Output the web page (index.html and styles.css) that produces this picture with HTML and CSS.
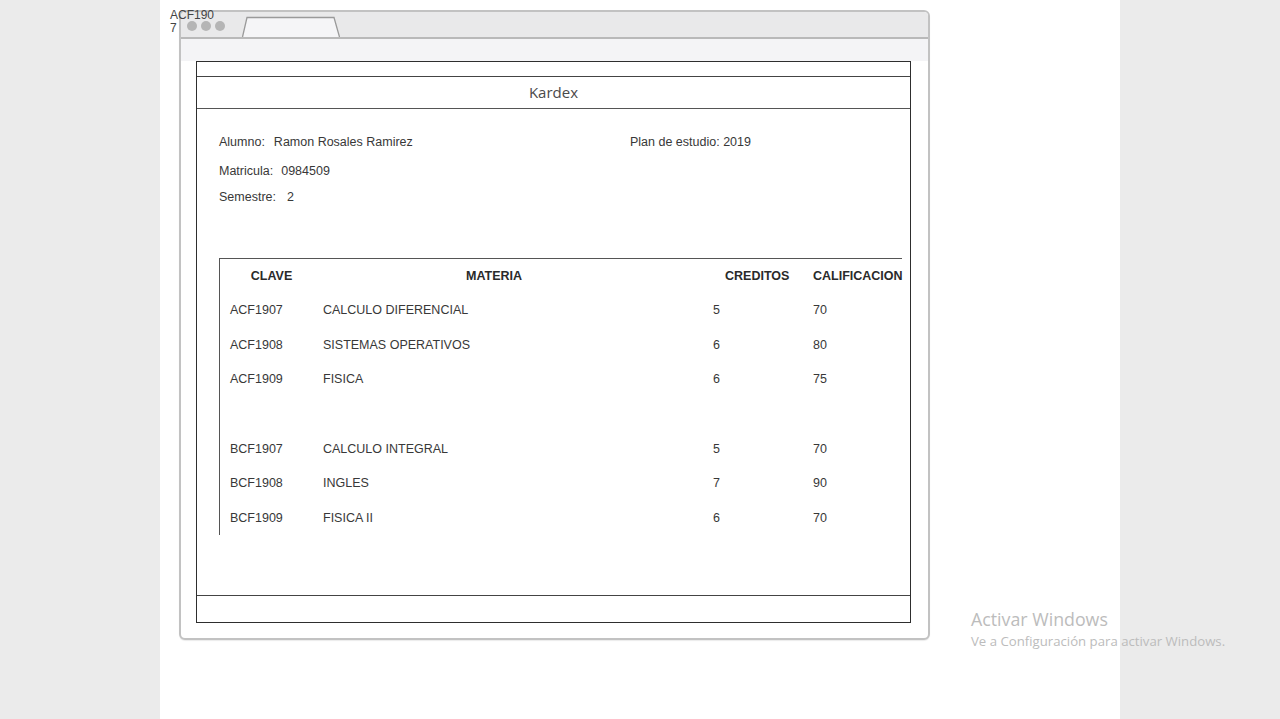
FILE: index.html
```html
<!DOCTYPE html>
<html lang="es">
<head>
<meta charset="utf-8">
<title>Kardex</title>
<link rel="stylesheet" href="styles.css">
</head>
<body>
<div class="page">
  <div class="window">
    <div class="titlebar">
      <span class="dot"></span><span class="dot"></span><span class="dot"></span>
      <svg class="tab" width="100" height="21" viewBox="0 0 100 21">
        <path d="M1.5 21 L6 1.5 L93 1.5 L98.5 21" fill="#f5f5f7" stroke="#9a9a9a" stroke-width="1.3"/>
      </svg>
    </div>
    <div class="addressbar"></div>
    <div class="content">
      <div class="box">
        <div class="topstrip"></div>
        <div class="heading">Kardex</div>
        <div class="main">
          <div class="info">
            <div class="inforow">
              <div class="cell-alumno"><span class="lbl lbl-alumno">Alumno:</span><span>Ramon Rosales Ramirez</span></div>
              <div><span class="lbl">Plan de estudio:</span> <span>2019</span></div>
            </div>
            <div class="inforow row-mat"><span class="lbl lbl-mat">Matricula:</span><span>0984509</span></div>
            <div class="inforow row-sem"><span class="lbl lbl-sem">Semestre:</span><span>2</span></div>
          </div>
          <div class="table">
            <div class="row head">
              <div class="c1">CLAVE</div>
              <div class="c2">MATERIA</div>
              <div class="c3">CREDITOS</div>
              <div class="c4">CALIFICACION</div>
            </div>
            <div class="row"><div class="c1">ACF1907</div><div class="c2">CALCULO DIFERENCIAL</div><div class="c3">5</div><div class="c4">70</div></div>
            <div class="row"><div class="c1">ACF1908</div><div class="c2">SISTEMAS OPERATIVOS</div><div class="c3">6</div><div class="c4">80</div></div>
            <div class="row"><div class="c1">ACF1909</div><div class="c2">FISICA</div><div class="c3">6</div><div class="c4">75</div></div>
            <div class="row"><div class="c1"></div><div class="c2"></div><div class="c3"></div><div class="c4"></div></div>
            <div class="row"><div class="c1">BCF1907</div><div class="c2">CALCULO INTEGRAL</div><div class="c3">5</div><div class="c4">70</div></div>
            <div class="row"><div class="c1">BCF1908</div><div class="c2">INGLES</div><div class="c3">7</div><div class="c4">90</div></div>
            <div class="row"><div class="c1">BCF1909</div><div class="c2">FISICA II</div><div class="c3">6</div><div class="c4">70</div></div>
          </div>
        </div>
        <div class="footer"></div>
      </div>
    </div>
  </div>
  <div class="label-overlay">ACF190 7</div>
</div>
<div class="activate">
  <div class="act1">Activar Windows</div>
  <div class="act2">Ve a Configuración para activar Windows.</div>
</div>
</body>
</html>
```
FILE: styles.css
```css
html, body {
  margin: 0;
  padding: 0;
}
body {
  background: #ebebeb;
  height: 719px;
  overflow: hidden;
  font-family: "Liberation Sans", Arial, sans-serif;
  color: #333;
}
.page {
  position: relative;
  margin-left: 160px;
  width: 960px;
  height: 719px;
  background: #ffffff;
  padding: 10px 0 0 19px;
  box-sizing: border-box;
}
.window {
  width: 751px;
  height: 630px;
  box-sizing: border-box;
  border: 2px solid #c2c2c2;
  border-radius: 6px;
  background: #fff;
  display: flex;
  flex-direction: column;
  overflow: hidden;
  box-shadow: 0 1px 1px rgba(0,0,0,0.08);
}
.titlebar {
  height: 25px;
  flex: none;
  background: #e9e9ea;
  border-bottom: 2px solid #b9b9b9;
  display: flex;
  align-items: flex-end;
  padding-left: 6px;
  box-sizing: content-box;
}
.dot {
  width: 10px;
  height: 10px;
  border-radius: 50%;
  background: #b5b5b5;
  margin-right: 4px;
  align-self: center;
  margin-top: 2px;
}
.tab {
  display: block;
  margin-left: 12px;
}
.addressbar {
  height: 22px;
  flex: none;
  background: #f4f4f6;
}
.content {
  flex: 1;
  padding: 0 17px 0 15px;
}
.box {
  height: 562px;
  box-sizing: border-box;
  border: 1px solid #2e2e2e;
  display: flex;
  flex-direction: column;
}
.topstrip {
  height: 14px;
  flex: none;
  border-bottom: 1px solid #444;
}
.heading {
  height: 32px;
  flex: none;
  border-bottom: 1px solid #555;
  display: flex;
  align-items: center;
  justify-content: center;
  font-family: "Open Sans", "Noto Sans", sans-serif;
  font-size: 15px;
  color: #4a4a4a;
  padding-bottom: 1px;
  box-sizing: border-box;
}
.main {
  flex: 1;
  padding: 26px 0 0 22px;
  border-bottom: 1px solid #444;
}
.footer {
  height: 26px;
  flex: none;
}
.info {
  display: flex;
  flex-direction: column;
  font-size: 12.5px;
  line-height: 14px;
  color: #383838;
}
.inforow {
  display: flex;
}
.row-mat { margin-top: 15px; }
.row-sem { margin-top: 12px; }
.cell-alumno {
  width: 411px;
}
.lbl-alumno { margin-right: 9px; }
.lbl-mat { margin-right: 8px; }
.lbl-sem { margin-right: 11px; }
.table {
  margin-top: 54px;
  width: 683px;
  box-sizing: border-box;
  border-left: 1px solid #555;
  border-top: 1px solid #555;
  font-size: 12.5px;
  color: #383838;
}
.row {
  display: grid;
  grid-template-columns: 103px 342px 148px 89px;
  height: 34.6px;
  align-items: center;
}
.row.head {
  height: 34px;
  padding-bottom: 1px;
  box-sizing: border-box;
  font-weight: bold;
  color: #2a2a2a;
}
.c1 { padding-left: 10px; }
.c3 { padding-left: 48px; }
.head .c1 { padding-left: 0; text-align: center; }
.head .c2 { text-align: center; }
.head .c3 { padding-left: 60px; }
.head .c4 { white-space: nowrap; }
.label-overlay {
  position: absolute;
  left: 10px;
  top: 9px;
  width: 46px;
  font-size: 12px;
  line-height: 13px;
  color: #444;
}
.activate {
  position: absolute;
  left: 971px;
  top: 608px;
  font-family: "Open Sans", "Noto Sans", sans-serif;
  color: #bcbcbc;
}
.act1 {
  font-size: 17.8px;
  line-height: 22px;
}
.act2 {
  font-size: 13.2px;
  line-height: 22px;
}
```
